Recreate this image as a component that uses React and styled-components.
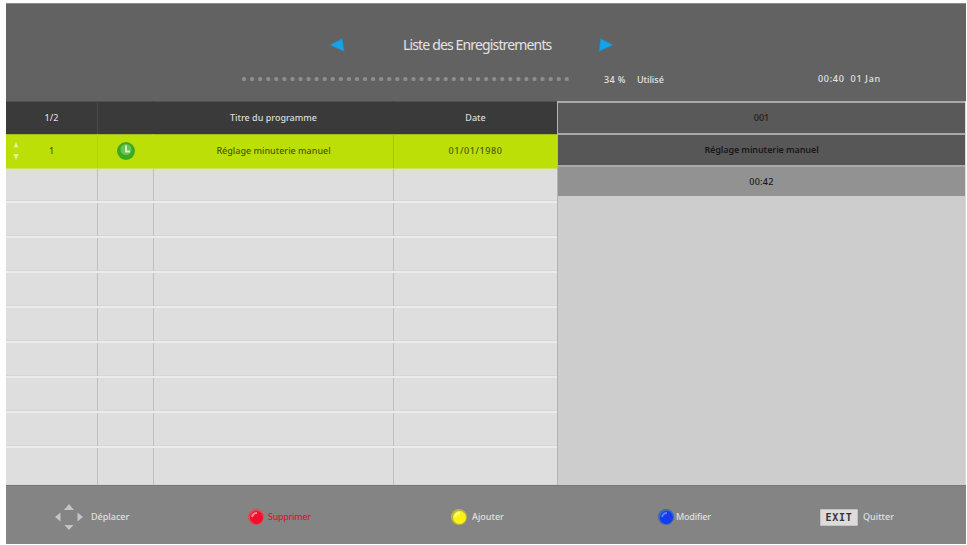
import React from 'react'
import styled, { createGlobalStyle } from 'styled-components'

const GlobalStyle = createGlobalStyle`
    * { box-sizing: border-box; }
    body {
        margin: 0;
        background: #fefefe;
        font-family: 'Noto Sans', 'Open Sans', sans-serif;
    }
`
const Screen = styled.div`
    width: 960px;
    height: 541px;
    margin: 3px 0 0 6px;
    display: flex;
    flex-direction: column;
    overflow: hidden;
    font-size: 9px;
    white-space: pre;
`
const Text = styled.span`
    line-height: 12px;
    font-size: ${p => p.$size || 9}px;
    font-weight: ${p => p.$weight || 500};
    letter-spacing: ${p => p.$spacing || 0}px;
    color: ${p => p.$color || 'inherit'};
`
const Header = styled.header`
    height: 98px;
    flex: none;
    padding-top: 28px;
    background: #626262;
    border-top: 1px solid #8a8a8a;
    color: #e4e4e4;
`
const TitleRow = styled.div`
    display: flex;
    align-items: center;
    height: 26px;
    padding-left: 322px;
`
const Title = styled.h1`
    width: 148px;
    margin: 0 46px 0 57px;
    font-size: 14px;
    font-weight: 400;
    line-height: 20px;
    letter-spacing: -0.85px;
`
const StatusRow = styled.div`
    display: flex;
    align-items: center;
    height: 16px;
    margin-top: 13px;
    padding-left: 235px;
`
const Dots = styled.svg`
    flex: none;
    margin-right: 33px;
`
const Used = styled.div`
    width: 214px;
    display: flex;
    gap: 11px;
    padding-top: 2px;
`
const Body = styled.main`
    display: flex;
    height: 384px;
    flex: none;
`
const Table = styled.section`
    width: 551px;
    display: flex;
    flex-direction: column;
`
const Row = styled.div`
    display: grid;
    grid-template-columns: 92px 56px 240px 163px;
    height: 35px;
    flex: none;
    background: #dedede;
    border-bottom: 2px solid #ebebeb;
    box-shadow: inset 0 -1px #d6d6d6;
    &:last-child {
        flex: 1;
        border-bottom: 0;
    }
`
const HeadRow = styled(Row)`
    height: 33px;
    background: #3a3a3a;
    border-bottom: 0;
    box-shadow: inset 0 1px #505050;
    color: #dcdcdc;
`
const SelectedRow = styled(Row)`
    height: 35px;
    background: #bcdf08;
    border-bottom: 1px solid #cce352;
    box-shadow: inset 0 1px #9fbd1c;
    color: #4b5a08;
    & + div { height: 34px; }
`
const Cell = styled.div`
    position: relative;
    display: flex;
    align-items: center;
    justify-content: center;
    border-right: 1px solid ${p => p.$line || '#bfbfbf'};
    &:last-child { border-right: 0; }
`
const Scroll = styled.svg`
    position: absolute;
    left: 6px;
    top: 7px;
`
const Details = styled.aside`
    flex: 1;
    background: #cdcdcd;
    border-left: 1px solid #b4b4b4;
    border-right: 1px solid #dadada;
`
const Info = styled.div`
    display: flex;
    align-items: center;
    justify-content: center;
    height: ${p => p.$height}px;
    background: ${p => p.$bg};
    border-top: 2px solid #a9a9a9;
    color: #191919;
`
const Footer = styled.footer`
    display: flex;
    flex: 1;
    padding: 12px 0 0 48px;
    background: #848484;
    border-top: 1px solid #777;
    color: #e0e0e0;
`
const Action = styled.div`
    display: flex;
    align-items: center;
    height: 38px;
    width: ${p => p.$width}px;
    gap: ${p => p.$gap}px;
    flex: none;
`
const ExitKey = styled.span`
    display: flex;
    align-items: center;
    justify-content: center;
    width: 38px;
    height: 17px;
    background: #dcdcdc;
    border: 1px solid #c4c4c4;
    border-radius: 1px;
    color: #333;
    font: bold 10px/15px 'DejaVu Sans Mono', monospace;
    letter-spacing: 0.7px;
`

const Arrow = ({ right }) => (
    <svg width="18" height="18" viewBox="0 0 18 18">
        <g transform={right ? 'translate(18 0) scale(-1 1)' : undefined}>
            <path d="M1.500 9 14.500 2 16.500 16Z" fill="#2f86b5" />
            <path d="M3 9 14 3.500 15.500 14.500Z" fill="#13a5ec" />
        </g>
    </svg>
)

const Clock = () => (
    <svg width="20" height="20" viewBox="0 0 20 20">
        <circle cx="10" cy="10" r="9" fill="#3caa20" />
        <circle cx="10" cy="8.5" r="5.5" fill="#68c355" />
        <path d="M10 4.5V10.5H14" fill="none" stroke="#d4f0bd" strokeWidth="2" />
    </svg>
)

const MoveIcon = () => (
    <svg width="30" height="28" viewBox="0 0 30 28">
        <path d="M15 1 20 7H10ZM15 27 19.500 22H10.500ZM1 14 6.500 9.500V18.500ZM29 14 23.500 9.500V18.500Z" fill="#c4c4c4" />
    </svg>
)

const Ball = ({ color, glow, light }) => (
    <svg width="18" height="18" viewBox="0 0 18 18">
        <circle cx="9" cy="9" r="8" fill={glow} />
        <circle cx="9.5" cy="9.5" r="6.5" fill={color} />
        <path d="M5 9Q6 5 10 5" fill="none" stroke={light} strokeWidth="2" />
    </svg>
)

const emptyRows = Array.from({ length: 9 }, (_, i) => i)
const dots = Array.from({ length: 41 }, (_, i) => i)

const App = () => (
    <>
        <GlobalStyle />
        <Screen>
            <Header>
                <TitleRow>
                    <Arrow />
                    <Title>Liste des Enregistrements</Title>
                    <Arrow right />
                </TitleRow>
                <StatusRow>
                    <Dots width="330" height="6">
                        {dots.map(i => <rect key={i} x={i * 8.07 + 1} y="1" width="4" height="4" rx="1.5" fill="#8c8c8c" />)}
                    </Dots>
                    <Used>
                        <Text $spacing={0.4}>34 %</Text>
                        <Text>Utilisé</Text>
                    </Used>
                    <Text $spacing={0.7}>00:40  01 Jan</Text>
                </StatusRow>
            </Header>
            <Body>
                <Table>
                    <HeadRow>
                        <Cell $line="#484848"><Text>1/2</Text></Cell>
                        <Cell $line="#3a3a3a" />
                        <Cell $line="#3a3a3a"><Text>Titre du programme</Text></Cell>
                        <Cell><Text>Date</Text></Cell>
                    </HeadRow>
                    <SelectedRow>
                        <Cell $line="#b2ce32">
                            <Scroll width="8" height="20">
                                <path d="M4 1 6.500 6.500H1.500ZM4 19 1.500 13H6.500Z" fill="#e3f09c" />
                            </Scroll>
                            <Text>1</Text>
                        </Cell>
                        <Cell $line="#bcdf08"><Clock /></Cell>
                        <Cell $line="#a5bd35"><Text>Réglage minuterie manuel</Text></Cell>
                        <Cell><Text $spacing={0.6}>01/01/1980</Text></Cell>
                    </SelectedRow>
                    {emptyRows.map(i => (
                        <Row key={i}><Cell /><Cell /><Cell /><Cell /></Row>
                    ))}
                </Table>
                <Details>
                    <Info $height={32} $bg="#595959"><Text>001</Text></Info>
                    <Info $height={32} $bg="#575757"><Text $weight={600} $spacing={-0.1}>Réglage minuterie manuel</Text></Info>
                    <Info $height={31} $bg="#929292"><Text $spacing={0.3}>00:42</Text></Info>
                </Details>
            </Body>
            <Footer>
                <Action $width={193} $gap={7}><MoveIcon /><Text>Déplacer</Text></Action>
                <Action $width={203} $gap={3}>
                    <Ball color="#f40d2c" glow="#d84b59" light="#ff8490" />
                    <Text $color="#d52222" $spacing={-0.3}>Supprimer</Text>
                </Action>
                <Action $width={207} $gap={4}>
                    <Ball color="#fcf313" glow="#bdb63b" light="#ffff8b" />
                    <Text>Ajouter</Text>
                </Action>
                <Action $width={163} $gap={1}>
                    <Ball color="#143bed" glow="#3b69ba" light="#577fff" />
                    <Text $spacing={-0.2}>Modifier</Text>
                </Action>
                <Action $width={90} $gap={5}><ExitKey>EXIT</ExitKey><Text>Quitter</Text></Action>
            </Footer>
        </Screen>
    </>
)

export default App
